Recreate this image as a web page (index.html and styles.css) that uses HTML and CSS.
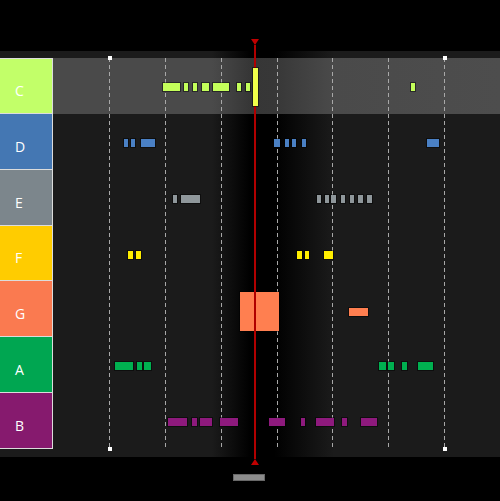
FILE: index.html
```html
<!DOCTYPE html>
<html>
<head>
<meta charset="utf-8">
<link rel="stylesheet" href="styles.css">
</head>
<body>
<div class="screen">
  <div class="top"></div>
  <div class="timeline">
    <div class="rows">
      <div class="row row-c">
        <div class="label">C</div>
        <div class="track">
          <div class="note" style="left:110px;width:17px"></div>
          <div class="note" style="left:131px;width:4px"></div>
          <div class="note" style="left:140px;width:4px"></div>
          <div class="note" style="left:149px;width:7px"></div>
          <div class="note" style="left:160px;width:16px"></div>
          <div class="note" style="left:184px;width:4px"></div>
          <div class="note" style="left:193px;width:4px"></div>
          <div class="note hit" style="left:200px;width:5px"></div>
          <div class="note" style="left:358px;width:4px"></div>
        </div>
      </div>
      <div class="row row-d">
        <div class="label">D</div>
        <div class="track">
          <div class="note" style="left:71px;width:4px"></div>
          <div class="note" style="left:78px;width:4px"></div>
          <div class="note" style="left:88px;width:14px"></div>
          <div class="note" style="left:221px;width:6px"></div>
          <div class="note" style="left:232px;width:4px"></div>
          <div class="note" style="left:239px;width:4px"></div>
          <div class="note" style="left:249px;width:4px"></div>
          <div class="note" style="left:374px;width:12px"></div>
        </div>
      </div>
      <div class="row row-e">
        <div class="label">E</div>
        <div class="track">
          <div class="note" style="left:120px;width:4px"></div>
          <div class="note" style="left:128px;width:19px"></div>
          <div class="note" style="left:264px;width:4px"></div>
          <div class="note" style="left:272px;width:4px"></div>
          <div class="note" style="left:278px;width:5px"></div>
          <div class="note" style="left:288px;width:4px"></div>
          <div class="note" style="left:297px;width:4px"></div>
          <div class="note" style="left:305px;width:5px"></div>
          <div class="note" style="left:314px;width:5px"></div>
        </div>
      </div>
      <div class="row row-f">
        <div class="label">F</div>
        <div class="track">
          <div class="note" style="left:75px;width:5px"></div>
          <div class="note" style="left:83px;width:5px"></div>
          <div class="note" style="left:244px;width:5px"></div>
          <div class="note" style="left:252px;width:4px"></div>
          <div class="note" style="left:271px;width:9px"></div>
        </div>
      </div>
      <div class="row row-g">
        <div class="label">G</div>
        <div class="track">
          <div class="note big" style="left:187px;width:39px"></div>
          <div class="note" style="left:296px;width:19px"></div>
        </div>
      </div>
      <div class="row row-a">
        <div class="label">A</div>
        <div class="track">
          <div class="note" style="left:62px;width:18px"></div>
          <div class="note" style="left:84px;width:5px"></div>
          <div class="note" style="left:91px;width:7px"></div>
          <div class="note" style="left:326px;width:7px"></div>
          <div class="note" style="left:335px;width:6px"></div>
          <div class="note" style="left:349px;width:5px"></div>
          <div class="note" style="left:365px;width:15px"></div>
        </div>
      </div>
      <div class="row row-b">
        <div class="label">B</div>
        <div class="track">
          <div class="note" style="left:115px;width:19px"></div>
          <div class="note" style="left:139px;width:5px"></div>
          <div class="note" style="left:147px;width:12px"></div>
          <div class="note" style="left:167px;width:18px"></div>
          <div class="note" style="left:216px;width:16px"></div>
          <div class="note" style="left:248px;width:4px"></div>
          <div class="note" style="left:263px;width:18px"></div>
          <div class="note" style="left:289px;width:5px"></div>
          <div class="note" style="left:308px;width:16px"></div>
        </div>
      </div>
    </div>
    <div class="grid">
      <div class="col"><span class="dot dot-top"></span><span class="dot dot-bottom"></span></div>
      <div class="col"></div>
      <div class="col"></div>
      <div class="col"></div>
      <div class="col"></div>
      <div class="col"></div>
      <div class="col"><span class="dot dot-top"></span><span class="dot dot-bottom"></span></div>
    </div>
  </div>
  <div class="bottom">
    <div class="thumb"></div>
  </div>
  <div class="playhead">
    <div class="tri tri-down"></div>
    <div class="line"></div>
    <div class="tri tri-up"></div>
  </div>
</div>
</body>
</html>
```
FILE: styles.css
```css
html, body {
  margin: 0;
  padding: 0;
  background: #000;
}
.screen {
  width: 500px;
  height: 501px;
  background: #000;
  position: relative;
  overflow: hidden;
  display: flex;
  flex-direction: column;
  font-family: "Open Sans", "Liberation Sans", sans-serif;
}
.top {
  height: 51px;
  flex: none;
}
.timeline {
  height: 406px;
  flex: none;
  box-sizing: border-box;
  padding: 7px 0 8px;
  position: relative;
  background: linear-gradient(to right, #1b1b1b 0, #1b1b1b 212px, #000 250px, #000 274px, #1b1b1b 334px, #1b1b1b 100%);
}
.rows {
  display: grid;
  grid-template-rows: repeat(7, 1fr);
  height: 391px;
}
.row {
  display: flex;
}
.row-c {
  background: linear-gradient(to right, #4a4a4a 0, #4a4a4a 212px, #363636 250px, #373737 274px, #4a4a4a 334px, #4d4d4d 100%);
}
.label {
  width: 53px;
  flex: none;
  box-sizing: border-box;
  border-right: 1px solid #dcdcdc;
  border-bottom: 1px solid #dcdcdc;
  color: #fff;
  font-size: 14px;
  padding: 10px 0 0 15px;
  display: flex;
  align-items: center;
}
.row-c .label {
  border-top: 1px solid #dcdcdc;
  background: #c2ff69;
}
.row-d .label { background: #4477b3; }
.row-e .label { background: #7c868c; }
.row-f .label { background: #ffcc00; }
.row-g .label { background: #fa7a50; }
.row-a .label { background: #00a651; }
.row-b .label { background: #861a6e; }
.track {
  flex: 1;
  position: relative;
}
.note {
  position: absolute;
  top: 25px;
  height: 8px;
  box-shadow: 0 0 0 1px rgba(0, 0, 0, 0.45);
  z-index: 2;
}
.row-c .note { background: #c4ff5a; }
.row-d .note { background: #4a80c4; }
.row-e .note { background: #8f979b; }
.row-f .note { background: #ffee00; }
.row-g .note { background: #ff7f50; }
.row-a .note { background: #00b050; }
.row-b .note { background: #8e1a7d; }
.row-c .note.hit {
  top: 10px;
  height: 38px;
  background: #f0ff4a;
  z-index: 4;
}
.row-g .note.big {
  top: 10.5px;
  height: 39px;
}
.row-g .note:not(.big) {
  top: 26.5px;
}
.grid {
  position: absolute;
  top: 7px;
  bottom: 8px;
  left: 109px;
  right: 0;
  display: flex;
  z-index: 1;
  pointer-events: none;
}
.col {
  width: 55.857px;
  flex: none;
  position: relative;
}
.col::before {
  content: "";
  position: absolute;
  left: 0;
  top: 0;
  bottom: 0;
  width: 1px;
  background: repeating-linear-gradient(to bottom, #a8a8a8 0, #a8a8a8 4px, transparent 4px, transparent 7px);
}
.dot {
  position: absolute;
  left: -1.5px;
  width: 4px;
  height: 4px;
  background: #fff;
}
.dot-top { top: -2px; }
.dot-bottom { bottom: -2px; }
.bottom {
  flex: 1;
}
.thumb {
  margin: 17px 0 0 233px;
  width: 30px;
  height: 5px;
  background: #8c8c8c;
  border: 1px solid #686868;
}
.playhead {
  position: absolute;
  left: 251px;
  top: 39px;
  width: 8px;
  height: 426px;
  display: flex;
  flex-direction: column;
  align-items: center;
  z-index: 3;
}
.tri {
  width: 0;
  height: 0;
  border-left: 4px solid transparent;
  border-right: 4px solid transparent;
  flex: none;
}
.tri-down { border-top: 6px solid #c00000; }
.tri-up { border-bottom: 6px solid #c00000; }
.line {
  flex: 1;
  width: 2px;
  background: #b00000;
}
```
